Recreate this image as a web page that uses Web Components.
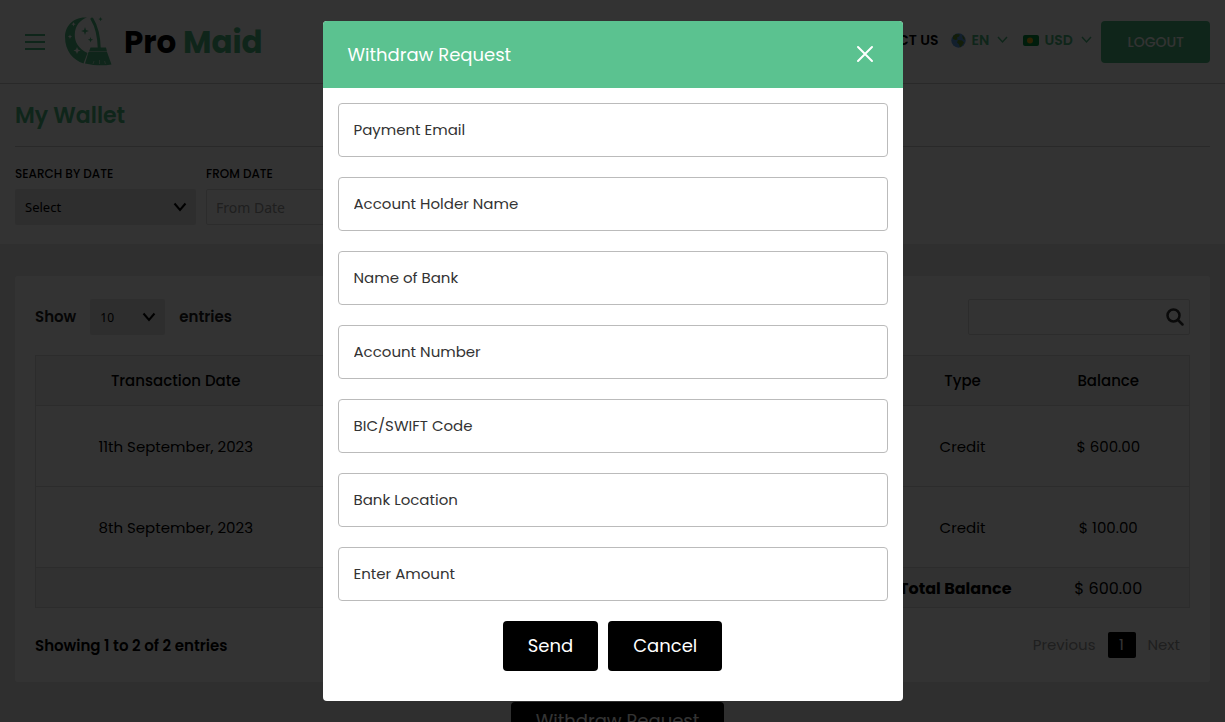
<!DOCTYPE html>
<html lang="en">
<head>
<meta charset="utf-8">
<title>My Wallet - Pro Maid</title>
<style>
  html, body { margin: 0; height: 100%; }
  body {
    --header-green: #5bc290;
    --green: #4bba80;
    --line: #ddd;
    overflow: hidden;
    background: #ebebeb;
    color: #000;
    font-family: Poppins, Inter, sans-serif;
    font-size: 15px;
    line-height: 24px;
  }
</style>
</head>
<body>
<wallet-page></wallet-page>
<modal-dialog heading="Withdraw Request">
  <text-field label="Payment Email" type="email"></text-field>
  <text-field label="Account Holder Name"></text-field>
  <text-field label="Name of Bank"></text-field>
  <text-field label="Account Number"></text-field>
  <text-field label="BIC/SWIFT Code"></text-field>
  <text-field label="Bank Location"></text-field>
  <text-field label="Enter Amount"></text-field>
  <action-button slot="actions">Send</action-button>
  <action-button slot="actions">Cancel</action-button>
</modal-dialog>

<script>
const define = (name, render) => customElements.define(name, class extends HTMLElement {
  constructor() {
    super();
    this.attachShadow({ mode: 'open' });
  }
  connectedCallback() {
    const t = document.createElement('template');
    t.innerHTML = '<style>*{box-sizing:border-box}</style>' + render(this);
    this.shadowRoot.replaceChildren(t.content.cloneNode(true));
  }
});

define('action-button', () => `
  <style>
    :host { display: block; }
    button {
      display: block; height: var(--button-height, 50px); padding: 0 25px; border: 0; border-radius: 4px;
      background: #000; color: #fff; font: inherit; font-size: 18px; white-space: nowrap;
    }
  </style>
  <button type="button"><slot></slot></button>`);

define('text-field', el => `
  <style>
    :host { display: block; }
    input {
      display: block; width: 100%; height: 54px; padding: 0 15px 2px;
      border: 1px solid #bbb; border-radius: 4px; background: #fff;
      color: #333; font: inherit;
    }
    input::placeholder { color: #333; opacity: 1; }
  </style>
  <input type="${el.getAttribute('type') || 'text'}" aria-label="${el.getAttribute('label')}" placeholder="${el.getAttribute('label')}">`);

define('modal-dialog', el => `
  <style>
    :host {
      position: fixed; inset: 0; display: flex; align-items: center; justify-content: center;
      background: rgba(0, 0, 0, .8);
    }
    section { width: 580px; max-width: 100%; border-radius: 4px; overflow: hidden; background: #fff; }
    header {
      display: flex; align-items: center; justify-content: space-between;
      height: 67px; padding: 0 25px; background: var(--header-green); color: #fff;
    }
    h2 { margin: 0; font-size: 18px; font-weight: 400; }
    .close { display: flex; padding: 3px 4px 5px; border: 0; background: none; color: inherit; }
    form { display: flex; flex-direction: column; gap: 20px; padding: 15px 15px 30px; }
    .actions { display: flex; justify-content: center; gap: 10px; }
  </style>
  <section role="dialog" aria-modal="true" aria-labelledby="title">
    <header>
      <h2 id="title">${el.getAttribute('heading')}</h2>
      <button class="close" type="button" aria-label="Close">
        <svg width="18" height="18" viewBox="0 0 18 18" fill="none" stroke="currentColor" stroke-width="2" stroke-linecap="round"><path d="M2 2l14 14M16 2L2 16"/></svg>
      </button>
    </header>
    <form>
      <slot></slot>
      <div class="actions"><slot name="actions"></slot></div>
    </form>
  </section>`);

define('pick-list', el => `
  <style>
    :host { display: flex; flex-direction: column; gap: 5px; font-size: 13px; }
    label { font-size: 12px; line-height: 20px; font-weight: 500; }
    .box { display: grid; align-items: center; }
    .box > * { grid-area: 1 / 1; }
    select {
      appearance: none; width: 100%; height: 36px; padding: 0 10px; border: 0; border-radius: 2px;
      background: #e4e4e4; color: #000; font-family: "Noto Sans", sans-serif; font-size: inherit;
    }
    svg { justify-self: end; margin-right: 9px; pointer-events: none; }
  </style>
  ${el.hasAttribute('caption') ? `<label for="pick">${el.getAttribute('caption')}</label>` : ''}
  <div class="box">
    <select id="pick" ${el.hasAttribute('caption') ? '' : `aria-label="${el.getAttribute('label')}"`}><option>${el.getAttribute('value')}</option></select>
    <svg width="14" height="10" viewBox="0 0 14 10" fill="none" stroke="#000" stroke-width="2"><path d="M1.500 1.500l5.500 6.500 5.500-6.500"/></svg>
  </div>`);

define('nav-choice', el => `
  <style>
    :host { display: flex; align-items: center; gap: 5px; color: var(--green); }
    select {
      appearance: none; padding: 0; border: 0; background: none; color: inherit;
      font: inherit; font-size: 14px; font-weight: 600;
    }
    .arrow { margin-left: 3px; }
  </style>
  <slot></slot>
  <select aria-label="${el.getAttribute('label')}"><option>${el.getAttribute('value')}</option></select>
  <svg class="arrow" width="11" height="8" viewBox="0 0 11 8" fill="none" stroke="currentColor" stroke-width="1.500"><path d="M1 1l4.500 5L10 1"/></svg>`);

define('brand-logo', () => `
  <style>
    :host { display: block; }
    a { display: flex; align-items: center; gap: 12px; color: #000; text-decoration: none; font-size: 31px; line-height: 46px; font-weight: 700; }
    svg { display: block; color: var(--green); }
    b { font-weight: 700; color: var(--green); }
  </style>
  <a href="#">
    <svg width="47" height="50" viewBox="0 0 47 50" fill="currentColor" aria-hidden="true">
      <path d="M22 .600C8-.500 0 9.500 0 20c0 14 8 23 18.500 26.500L22.500 36C12.500 31 9.500 24 9.800 17 10.200 9 15 3 22 .600z"/>
      <path d="M27 2c5 8 7 18 7.300 30" fill="none" stroke="currentColor" stroke-width="3" stroke-linecap="round"/>
      <path d="M25.500 30.500h15.500l1 4H24z"/>
      <path d="M23.500 35h18.500L46.500 47.500c-9 1.500-17 1-26.500-1z"/>
      <path d="M29 44l-1 3M34.500 43v4M39.500 44l1 3" stroke="#fff" stroke-width=".5"/>
      <path d="M20 10l1 3 3 1-3 1-1 3-1-3-3-1 3-1zM25.500 20l.7 2 2 .7-2 .7-.7 2-.7-2-2-.7 2-.7zM35.500 0l.7 1.500 1.500.6-1.500.6-.7 1.500-.7-1.500-1.500-.6 1.500-.6z"/>
      <path fill="#fff" d="M8.500 5l.6 1.600 1.600.6-1.600.6-.6 1.600-.6-1.600-1.600-.6 1.600-.6zM5 17.500l.6 1.600 1.600.6-1.600.6L5 22l-.6-1.700-1.600-.6 1.600-.6zM12 30l1 2.500 2.500 1L13 34.500 12 37l-1-2.500-2.500-1 2.500-1z"/>
    </svg>
    <span>Pro <b>Maid</b></span>
  </a>`);

define('site-header', () => `
  <style>
    :host {
      display: flex; align-items: center; justify-content: space-between;
      height: 84px; padding: 0 15px; border-bottom: 1px solid #ccc; background: #fff;
    }
    .left { display: flex; align-items: center; gap: 10px; }
    .menu { display: flex; padding: 10px; border: 0; background: none; color: var(--green); }
    nav { display: flex; align-items: center; }
    nav a { margin-right: 13px; color: #000; font-size: 14px; font-weight: 600; text-decoration: none; }
    nav > :not(.logout) { margin-bottom: 3px; }
    nav-choice + nav-choice { margin-left: 15px; }
    .logout {
      height: 42px; margin-left: 9px; padding: 0 26px; border: 0; border-radius: 4px;
      background: var(--green); color: #fff; font: inherit; font-size: 14px; font-weight: 500;
    }
  </style>
  <div class="left">
    <button class="menu" type="button" aria-label="Menu">
      <svg width="20" height="16" viewBox="0 0 20 16" fill="currentColor"><path d="M0 0h20v2H0zM0 7h20v2H0zM0 14h20v2H0z"/></svg>
    </button>
    <brand-logo></brand-logo>
  </div>
  <nav>
    <a href="#">CONTACT US</a>
    <nav-choice label="Language" value="EN">
      <svg width="15" height="15" viewBox="0 0 15 15"><circle cx="7.500" cy="7.500" r="7.200" fill="#5b9be0"/><path fill="#5f8f2d" d="M2 3l3-2 4 .5-1 2-2 1 .5 2-2 .5L2 6zM7 7l4 .5 2 2-2 3-2 2-1-3-2-2zM11 2l2 2 1 3-2-1z"/></svg>
    </nav-choice>
    <nav-choice label="Currency" value="USD">
      <svg width="16" height="11" viewBox="0 0 16 11"><rect width="16" height="11" rx="2" fill="#00913f"/><circle cx="7" cy="5.500" r="3" fill="#f0a818"/></svg>
    </nav-choice>
    <button class="logout" type="button">LOGOUT</button>
  </nav>`);

define('filter-bar', () => `
  <style>
    :host { display: block; padding: 16px 15px 19px; background: #fff; }
    h1 { margin: 0; padding-bottom: 14px; border-bottom: 1px solid #ccc; font-size: 22px; line-height: 32px; font-weight: 600; color: var(--green); }
    form { display: flex; gap: 10px; padding-top: 17px; }
    form > * { flex: 0 0 181px; }
    .field { display: flex; flex-direction: column; gap: 5px; }
    label { font-size: 12px; line-height: 20px; font-weight: 500; }
    input { width: 100%; height: 36px; padding: 0 9px; border: 1px solid var(--line); border-radius: 2px; background: #fff; font: 14px "Noto Sans", sans-serif; }
    input::placeholder { color: #999; opacity: 1; }
  </style>
  <h1>My Wallet</h1>
  <form>
    <pick-list caption="SEARCH BY DATE" value="Select"></pick-list>
    <div class="field"><label for="from">FROM DATE</label><input id="from" placeholder="From Date"></div>
  </form>`);

define('transaction-table', () => `
  <style>
    :host { display: block; }
    table { width: 100%; table-layout: fixed; border-collapse: collapse; border: 1px solid var(--line); text-align: center; }
    th, td { padding: 0 16px; font-weight: 400; border-top: 1px solid var(--line); }
    th { height: 50px; font-weight: 500; }
    thead, tfoot { background: #f5f5f5; }
    tbody td { height: 81px; padding-top: 2px; }
    tfoot td { height: 40px; padding-top: 3px; font-size: 16px; }
    tfoot .total { text-align: right; font-weight: 700; }
    .date { width: 280px; } .type { width: 130px; } .balance { width: 162px; }
  </style>
  <table>
    <colgroup><col class="date"><col><col class="type"><col class="balance"></colgroup>
    <thead><tr><th>Transaction Date</th><th></th><th>Type</th><th>Balance</th></tr></thead>
    <tbody>
      <tr><td>11th September, 2023</td><td></td><td>Credit</td><td>$ 600.00</td></tr>
      <tr><td>8th September, 2023</td><td></td><td>Credit</td><td>$ 100.00</td></tr>
    </tbody>
    <tfoot><tr><td class="total" colspan="3">Total Balance</td><td>$ 600.00</td></tr></tfoot>
  </table>`);

define('page-links', () => `
  <style>
    :host { display: flex; align-items: center; gap: 12px; padding-right: 10px; margin-bottom: 2px; }
    a { color: #999; text-decoration: none; }
    a[aria-current] { width: 28px; line-height: 26px; border-radius: 2px; text-align: center; background: #000; color: #fff; }
  </style>
  <a href="#">Previous</a><a href="#" aria-current="page">1</a><a href="#">Next</a>`);

define('wallet-card', () => `
  <style>
    :host { display: block; margin: 32px 15px 20px; padding: 23px 20px 22px; border-radius: 3px; background: #fff; }
    .bar, .length { display: flex; align-items: center; }
    .bar { justify-content: space-between; }
    .length { gap: 14px; font-weight: 600; color: #222; }
    pick-list { width: 75px; font-size: 12px; }
    .search { display: grid; align-items: center; width: 222px; }
    .search > * { grid-area: 1 / 1; }
    .search svg { justify-self: end; margin-right: 6px; }
    input { width: 100%; height: 36px; border: 1px solid var(--line); border-radius: 2px; background: #fff; font: inherit; }
    transaction-table { margin: 20px 0 24px; }
    .count { font-weight: 600; }
  </style>
  <div class="bar">
    <div class="length"><span>Show</span><pick-list label="Entries per page" value="10"></pick-list><span>entries</span></div>
    <div class="search">
      <input type="search" aria-label="Search">
      <svg width="18" height="18" viewBox="0 0 18 18" fill="none" stroke="#333" stroke-width="2.500" stroke-linecap="round"><circle cx="7.500" cy="7.500" r="6"/><path d="M12 12l4.500 4.500"/></svg>
    </div>
  </div>
  <transaction-table></transaction-table>
  <div class="bar"><span class="count">Showing 1 to 2 of 2 entries</span><page-links></page-links></div>`);

define('wallet-page', () => `
  <style>
    :host { display: block; }
    .request { --button-height: 38px; display: flex; justify-content: center; padding-left: 10px; }
  </style>
  <site-header></site-header>
  <main>
    <filter-bar></filter-bar>
    <wallet-card></wallet-card>
    <div class="request"><action-button>Withdraw Request</action-button></div>
  </main>`);
</script>
</body>
</html>
